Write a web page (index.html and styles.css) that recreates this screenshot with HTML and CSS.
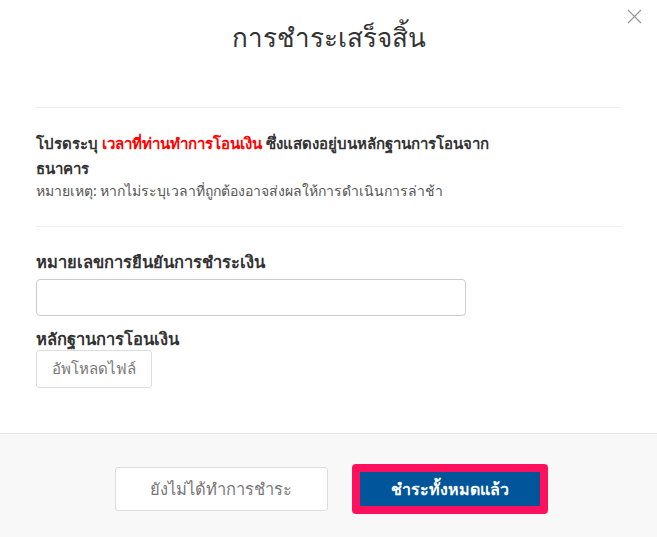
FILE: index.html
```html
<!DOCTYPE html>
<html>
<head>
	<meta charset="utf-8" />
	<title>การชำระเสร็จสิ้น</title>
	<link rel="stylesheet" href="styles.css">
</head>
<body>
	<div class="modal">
		<div class="modal_head">
			<h2>การชำระเสร็จสิ้น</h2>
			<span class="close">
				<svg width="15" height="15" viewBox="0 0 15 15"><path d="M1 1L14 14M14 1L1 14" stroke="#999" stroke-width="1.2" fill="none"/></svg>
			</span>
		</div>
		<div class="modal_body">
			<div class="notice">
				<p class="strong">โปรดระบุ <span class="red">เวลาที่ท่านทำการโอนเงิน</span> ซึ่งแสดงอยู่บนหลักฐานการโอนจาก ธนาคาร</p>
				<p class="note">หมายเหตุ: หากไม่ระบุเวลาที่ถูกต้องอาจส่งผลให้การดำเนินการล่าช้า</p>
			</div>
			<div class="form">
				<label>หมายเลขการยืนยันการชำระเงิน</label>
				<input type="text" class="field" />
				<label class="second">หลักฐานการโอนเงิน</label>
				<button class="upload">อัพโหลดไฟล์</button>
			</div>
		</div>
		<div class="modal_foot">
			<button class="btn_cancel">ยังไม่ได้ทำการชำระ</button>
			<div class="mark">
				<button class="btn_ok">ชำระทั้งหมดแล้ว</button>
			</div>
		</div>
	</div>
</body>
</html>
```
FILE: styles.css
```css
body{
	margin: 0;
	background: #fff;
	font-family: "Noto Sans", "DejaVu Sans", sans-serif;
	color: #333;
}
.modal{
	width: 657px;
	height: 537px;
	display: flex;
	flex-direction: column;
	position: relative;
	overflow: hidden;
}
.modal_head{
	height: 107px;
	flex-shrink: 0;
	text-align: center;
}
.modal_head h2{
	margin: 0;
	padding-top: 18px;
	font-size: 26px;
	font-weight: normal;
	line-height: 38px;
	color: #333;
}
.close{
	position: absolute;
	top: 7px;
	right: 15px;
	cursor: pointer;
}
.modal_body{
	flex: 1;
	padding: 0 36px;
}
.notice{
	border-top: 1px solid #eee;
	border-bottom: 1px solid #eee;
	padding: 23px 0 25px;
}
.notice p{
	margin: 0;
}
.strong{
	max-width: 480px;
	font-size: 15px;
	font-weight: bold;
	line-height: 25px;
}
.red{
	color: #f00;
}
.note{
	font-size: 14px;
	line-height: 20px;
	color: #555;
}
.form{
	padding-top: 24px;
}
.form label{
	display: block;
	font-size: 16.5px;
	font-weight: bold;
	line-height: 22px;
}
.field{
	display: block;
	box-sizing: border-box;
	width: 430px;
	height: 37px;
	margin-top: 6px;
	border: 1px solid #ccc;
	border-radius: 4px;
	outline: none;
}
.form .second{
	margin-top: 12px;
}
.upload{
	box-sizing: border-box;
	width: 116px;
	height: 38px;
	background: #fff;
	border: 1px solid #ddd;
	border-radius: 3px;
	font-family: inherit;
	font-size: 15px;
	color: #777;
}
.modal_foot{
	height: 104px;
	flex-shrink: 0;
	box-sizing: border-box;
	border-top: 1px solid #e5e5e5;
	background: #f8f8f8;
	display: flex;
	justify-content: center;
	align-items: center;
	gap: 24px;
	padding: 7px 0 0 5px;
}
.btn_cancel{
	box-sizing: border-box;
	width: 213px;
	height: 44px;
	background: #fff;
	border: 1px solid #ddd;
	border-radius: 3px;
	font-family: inherit;
	font-size: 16.5px;
	color: #777;
}
.mark{
	background: #ff105e;
	border-radius: 4px;
	padding: 8px;
}
.btn_ok{
	display: block;
	width: 180px;
	height: 34px;
	background: #00559b;
	border: none;
	font-family: inherit;
	font-size: 16px;
	font-weight: bold;
	color: #fff;
}
```
